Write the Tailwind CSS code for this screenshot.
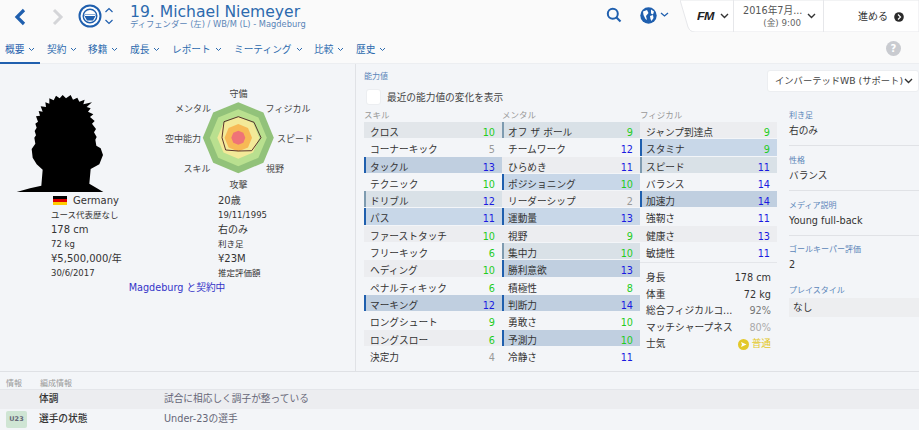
<!DOCTYPE html>
<html lang="ja">
<head>
    <meta charset="UTF-8">
    <title>Michael Niemeyer</title>
    <script src="https://cdn.jsdelivr.net/npm/@tailwindcss/browser@4"></script>
</head>
<body class="w-[919px] h-[430px] overflow-hidden bg-[#f3f5f8] text-[#333] text-[9.700px] font-['DejaVu_Sans','Noto_Sans_CJK_JP',sans-serif]">
    <!-- Title bar -->
    <header class="h-[32px] bg-[#fafafa] flex items-start relative">
        <svg class="ml-[14px] mt-[8px]" width="12" height="18" viewBox="0 0 12 18"><path d="M10 2 3 9l7 7" fill="none" stroke="#1f5fae" stroke-width="3.2"/></svg>
        <svg class="ml-[26px] mt-[8px]" width="12" height="18" viewBox="0 0 12 18"><path d="M2 2l7 7-7 7" fill="none" stroke="#d4d5d8" stroke-width="3"/></svg>
        <svg class="ml-[14px] mt-[4px]" width="24" height="24" viewBox="0 0 24 24">
            <circle cx="12" cy="12" r="10.5" fill="#fff" stroke="#1f5fae" stroke-width="2"/>
            <circle cx="12" cy="12" r="6.8" fill="none" stroke="#1f5fae" stroke-width="1.4"/>
            <path d="M6.5 10.5h11v1.5l-2.5 4.5h-6L6.500 12z" fill="#1f5fae"/>
            <path d="M7 11.500h10" stroke="#fff" stroke-width="1"/>
        </svg>
        <svg class="ml-[2px] mt-[7px]" width="10" height="18" viewBox="0 0 10 18"><path d="M1.500 5 5 1.500 8.500 5M1.500 13 5 16.500 8.500 13" fill="none" stroke="#1f5fae" stroke-width="1.200"/></svg>
        <div class="ml-[16px] mt-[5px]">
            <div class="text-[15.600px] leading-[15px] text-[#2c6aae]">19. Michael Niemeyer</div>
            <div class="text-[8.300px] leading-[9px] text-[#5b86b8]">ディフェンダー (左) / WB/M (L) - Magdeburg</div>
        </div>
        <svg class="absolute left-[606px] top-[7px]" width="16" height="16" viewBox="0 0 16 16"><circle cx="6.800" cy="6.800" r="5" fill="none" stroke="#1f5fae" stroke-width="2"/><path d="m10.500 10.500 4 4" stroke="#1f5fae" stroke-width="2.200"/></svg>
        <svg class="absolute left-[640px] top-[7px]" width="32" height="17" viewBox="0 0 32 17">
            <circle cx="8.500" cy="8.500" r="8.200" fill="#1f5fae"/>
            <path d="M3 4.500 7 3l1.500 3L6 9l1 4-1.500-1L3.500 8zM11 2.500l3 2-1 3-2-1zM10 9l3-1 .5 3-2 3-1-2z" fill="#fff"/>
            <path d="m21 6 3.500 3L28 6" fill="none" stroke="#1f5fae" stroke-width="1.300"/>
        </svg>
        <!-- Right hand tab -->
        <div class="absolute left-[680px] top-0 w-[239px] h-[33px]">
            <svg class="absolute left-0 top-0" width="239" height="33" viewBox="0 0 239 33"><path d="M0 0 8 27q2 5 7 5h224V0z" fill="#fff" stroke="#e6e7ea"/></svg>
            <div class="relative flex h-[32px]">
                <div class="w-[54px] pl-[17px] flex items-center gap-[6px] border-r border-[#e6e7ea]">
                    <span class="text-[10px] font-bold italic text-[#222] font-['Liberation_Sans',sans-serif] tracking-[-0.5px] scale-x-125 origin-left w-[14px]">FM</span>
                    <svg class="ml-[3px]" width="9" height="6" viewBox="0 0 9 6"><path d="m1 1 3.500 3.500L8 1" fill="none" stroke="#333" stroke-width="1.400"/></svg>
                </div>
                <div class="w-[90px] flex items-center border-r border-[#e6e7ea]">
                    <div class="w-[58px] ml-[9px] mt-[2px] text-right text-[#555] leading-[13px] whitespace-nowrap">
                        <div>2016年7月...</div>
                        <div class="text-[8.700px] text-[#666]">(金) 9:00</div>
                    </div>
                    <svg class="ml-[6px]" width="9" height="6" viewBox="0 0 9 6"><path d="m1 1 3.500 3.500L8 1" fill="none" stroke="#333" stroke-width="1.400"/></svg>
                </div>
                <div class="flex-1 pl-[34px] pt-[1px] flex items-center gap-[6px] text-[10px] text-[#333]">
                    <span>進める</span>
                    <svg width="10" height="10" viewBox="0 0 10 10"><circle cx="5" cy="5" r="4.800" fill="#2a2a2a"/><path d="m4 2.500 2.500 2.500L4 7.500" fill="none" stroke="#fff" stroke-width="1.200"/></svg>
                </div>
            </div>
        </div>
    </header>

    <!-- Tabs -->
    <nav class="h-[32px] bg-[#fafafa] border-b border-[#eceef1] flex items-center relative">
        <div id="tabs" class="flex pl-[5px] pt-[5px]"></div>
        <div class="absolute left-0 bottom-[-1px] w-[40px] h-[2px] bg-[#1f5fae]"></div>
        <div class="absolute left-[886px] top-[9px] w-[15px] h-[15px] rounded-full bg-[#c9cbd0] text-white font-bold text-[10px] leading-[15px] text-center">?</div>
    </nav>

    <main class="h-[308px] flex border-b border-[#dfe1e5]">
        <!-- Player summary -->
        <section class="w-[356px] shrink-0 border-r border-[#e0e2e6] relative">
            <div class="flex h-[128px]">
                <svg class="ml-[16px] mt-[27px] shrink-0" width="88" height="104" viewBox="50 40 264 296">
                    <path d="M52 335 92 324 126 316 130 268 112 252 100 232 97 206 108 190 105 172 110 165 106 152 112 142 108 130 116 124 110 108 122 106 118 92 130 94 124 78 140 80 138 66 150 70 150 54 163 60 170 46 181 54 190 44 200 54 214 44 221 58 234 52 240 64 256 58 252 72 278 66 262 80 274 84 266 94 282 102 272 110 286 122 278 130 290 146 284 156 292 170 288 178 291 196 304 204 311 224 300 252 274 266 270 310 312 335Z" fill="#000"/>
                </svg>
                <svg class="ml-[46px] mt-[22px] shrink-0" width="190" height="112" viewBox="150 86 190 112">
                    <polygon points="238.300,102.200 263.400,112.600 273.800,137.700 263.400,162.800 238.300,173.200 213.200,162.800 202.800,137.700 213.200,112.600" fill="#92c27a"/>
                    <polygon points="238.300,109.200 258.400,117.600 266.800,137.700 258.400,157.800 238.300,166.200 218.200,157.800 209.800,137.700 218.200,117.600" fill="#b9e08f"/>
                    <polygon points="238.300,116.700 253.100,122.900 259.300,137.700 253.100,152.500 238.300,158.700 223.500,152.500 217.300,137.700 223.500,122.900" fill="#f3e998"/>
                    <polygon points="238.300,124 248,128 252,137.700 248,147.400 238.300,151.400 228.600,147.400 224.600,137.700 228.600,128" fill="#f7b955"/>
                    <polygon points="238.300,130.700 243.300,132.700 245.300,137.700 243.300,142.700 238.300,144.700 233.300,142.700 231.300,137.700 233.300,132.700" fill="#ef7377"/>
                    <polygon points="238.300,116.700 254,122.300 261,137.700 251.700,150.700 238.300,151 225.700,150 222,137.700 224,121.700" fill="none" stroke="#4a1f1f" stroke-width="0.900"/>
                    <g font-size="9" fill="#444" text-anchor="middle">
                        <text x="238.500" y="97">守備</text>
                        <text x="288" y="112">フィジカル</text>
                        <text x="295" y="142">スピード</text>
                        <text x="275" y="172">視野</text>
                        <text x="238.500" y="188">攻撃</text>
                        <text x="197" y="172">スキル</text>
                        <text x="183" y="142">空中能力</text>
                        <text x="193" y="112">メンタル</text>
                    </g>
                </svg>
            </div>
            <div class="grid grid-cols-[167px_1fr] pl-[51px] mt-[1px]">
                <div class="h-[15px] flex items-center text-[10px] text-[#333]">
                    <span class="ml-[2px] mr-[6px] w-[14px] h-[9px] flex flex-col">
                        <span class="h-[3px] bg-black"></span><span class="h-[3px] bg-[#d00]"></span><span class="h-[3px] bg-[#fc0]"></span>
                    </span>Germany
                </div>
                <div class="h-[15px] leading-[15px] text-[10px]">20歳</div>
                <div class="h-[14px] leading-[14px] text-[8.500px]">ユース代表歴なし</div>
                <div class="h-[14px] leading-[14px] text-[8.500px]">19/11/1995</div>
                <div class="h-[15px] leading-[15px] text-[10px]">178 cm</div>
                <div class="h-[15px] leading-[15px] text-[10px]">右のみ</div>
                <div class="h-[14px] leading-[14px] text-[8.500px]">72 kg</div>
                <div class="h-[14px] leading-[14px] text-[8.500px]">利き足</div>
                <div class="h-[15px] leading-[15px] text-[10px]">¥5,500,000/年</div>
                <div class="h-[15px] leading-[15px] text-[10px]">¥23M</div>
                <div class="h-[14px] leading-[14px] text-[8.500px]">30/6/2017</div>
                <div class="h-[14px] leading-[14px] text-[8.500px]">推定評価額</div>
            </div>
            <div class="w-[354px] text-center text-[#3434c8] leading-[15px]">Magdeburg と契約中</div>
        </section>

        <!-- Attributes -->
        <section class="flex-1 relative pl-[8px]">
            <div class="text-[8px] leading-[10px] text-[#5b86b8] mt-[8px]">能力値</div>
            <label class="flex items-center mt-[6px] ml-[2px] h-[17px] gap-[6px] text-[#444]">
                <span class="w-[15px] h-[16px] bg-white border border-[#eceef1] rounded-[3px]"></span>
                <span class="mt-[3px]">最近の能力値の変化を表示</span>
            </label>
            <div class="absolute left-[411px] top-[6px] w-[152px] h-[22px] bg-white rounded-[3px] border border-[#eceef1] flex items-center justify-between pl-[7px] pr-[5px] text-[9.300px] text-[#444] whitespace-nowrap">
                インバーテッドWB (サポート)
                <svg width="9" height="6" viewBox="0 0 9 6"><path d="m1 1 3.500 3.500L8 1" fill="none" stroke="#333" stroke-width="1.400"/></svg>
            </div>
            <div class="flex mt-[3px]">
                <div class="w-[138px]">
                    <div class="text-[8.500px] leading-[15px] h-[14px] text-[#999]">スキル</div>
                    <div id="skills"></div>
                </div>
                <div class="w-[138px]">
                    <div class="text-[8.500px] leading-[15px] h-[14px] text-[#999]">メンタル</div>
                    <div id="mental"></div>
                </div>
                <div class="w-[137px]">
                    <div class="text-[8.500px] leading-[15px] h-[14px] text-[#999]">フィジカル</div>
                    <div id="physical"></div>
                    <div class="border-t border-[#e4e6ea] mt-[3px] pt-[7px] pl-[6px] pr-[6px]" id="stats"></div>
                </div>
                <!-- Side details -->
                <div class="ml-[12px] flex-1">
                    <div class="h-[38px] border-b border-[#e0e2e6] pt-[3px]">
                        <div class="text-[8px] leading-[10px] text-[#5b86b8]">利き足</div>
                        <div class="leading-[19px]">右のみ</div>
                    </div>
                    <div class="h-[45px] border-b border-[#e0e2e6] pt-[3px]">
                        <div class="text-[8px] leading-[10px] text-[#5b86b8] mt-[7px]">性格</div>
                        <div class="leading-[19px]">バランス</div>
                    </div>
                    <div class="h-[45px] border-b border-[#e0e2e6] pt-[3px]">
                        <div class="text-[8px] leading-[10px] text-[#5b86b8] mt-[7px]">メディア説明</div>
                        <div class="leading-[19px]">Young full-back</div>
                    </div>
                    <div class="pt-[9px]">
                        <div class="text-[8px] leading-[10px] text-[#5b86b8]">ゴールキーパー評価</div>
                        <div class="leading-[20px]">2</div>
                    </div>
                    <div class="text-[8px] leading-[10px] text-[#5b86b8] mt-[11px]">プレイスタイル</div>
                    <div class="h-[19px] mt-[2px] leading-[19px] pl-[4px] bg-[#edeef0]">なし</div>
                </div>
            </div>
        </section>
    </main>

    <!-- Squad info -->
    <footer>
        <div class="h-[17px] flex pl-[6px] gap-[18px] text-[8px] leading-[24px] text-[#999]">
            <span>情報</span><span>編成情報</span>
        </div>
        <div class="h-[20px] bg-[#ecedf0] flex items-center border-t border-[#e4e6ea]">
            <span class="ml-[39px] w-[125px] font-medium text-[#333]">体調</span>
            <span class="text-[#667]">試合に相応しく調子が整っている</span>
        </div>
        <div class="h-[21px] flex items-center">
            <span class="ml-[6px] w-[21px] h-[17px] rounded-[2px] bg-[#cfe5d4] text-[#667] text-[6.500px] font-bold leading-[17px] text-center">U23</span>
            <span class="ml-[12px] w-[125px] font-medium text-[#333]">選手の状態</span>
            <span class="text-[#667]">Under-23の選手</span>
        </div>
    </footer>

    <script>
        // Class names per row highlight
        const ROW = {
            none: 'pl-[6px]',
            grey: 'pl-[6px] bg-[#ecedf0]',
            pale: 'pl-[6px] bg-[#e2e6ea]',
            mid: 'pl-[4px] border-l-2 border-[#7e9bb0] bg-[#d9e1e7]',
            soft: 'pl-[4px] border-l-2 border-[#1f5fae] bg-[#c8d7e8]',
            dark: 'pl-[4px] border-l-2 border-[#1f5fae] bg-[#c0cfe0]',
        };
        const NUM = { g: 'text-[#1fcc1f]', b: 'text-[#1a1ae0]', x: 'text-[#999]' };

        const SKILLS = [
            ['クロス', 10, 'g', 'pale'], ['コーナーキック', 5, 'x', 'none'], ['タックル', 13, 'b', 'dark'],
            ['テクニック', 10, 'g', 'none'], ['ドリブル', 12, 'b', 'mid'], ['パス', 11, 'b', 'soft'],
            ['ファーストタッチ', 10, 'g', 'grey'], ['フリーキック', 6, 'g', 'none'], ['ヘディング', 10, 'g', 'grey'],
            ['ペナルティキック', 6, 'g', 'none'], ['マーキング', 12, 'b', 'dark'], ['ロングシュート', 9, 'g', 'none'],
            ['ロングスロー', 6, 'g', 'grey'], ['決定力', 4, 'x', 'none'],
        ];
        const MENTAL = [
            ['オフ ザ ボール', 9, 'g', 'mid'], ['チームワーク', 12, 'b', 'none'], ['ひらめき', 11, 'b', 'grey'],
            ['ポジショニング', 10, 'g', 'soft'], ['リーダーシップ', 2, 'x', 'grey'], ['運動量', 13, 'b', 'soft'],
            ['視野', 9, 'g', 'grey'], ['集中力', 10, 'g', 'mid'], ['勝利意欲', 13, 'b', 'dark'],
            ['積極性', 8, 'g', 'none'], ['判断力', 14, 'b', 'dark'], ['勇敢さ', 10, 'g', 'none'],
            ['予測力', 10, 'g', 'dark'], ['冷静さ', 11, 'b', 'none'],
        ];
        const PHYSICAL = [
            ['ジャンプ到達点', 9, 'g', 'grey'], ['スタミナ', 9, 'g', 'soft'], ['スピード', 11, 'b', 'mid'],
            ['バランス', 14, 'b', 'none'], ['加速力', 14, 'b', 'dark'], ['強靭さ', 11, 'b', 'none'],
            ['健康さ', 13, 'b', 'grey'], ['敏捷性', 11, 'b', 'none'],
        ];

        function renderRows(id, rows) {
            document.getElementById(id).innerHTML = rows.map(([name, value, color, row]) =>
                `<div class="h-[16.300px] mb-[1px] leading-[21px] pr-[7px] flex justify-between ${ROW[row]}"><span>${name}</span><span class="${NUM[color]}">${value}</span></div>`
            ).join('');
        }
        renderRows('skills', SKILLS);
        renderRows('mental', MENTAL);
        renderRows('physical', PHYSICAL);

        document.getElementById('stats').innerHTML = [
            ['身長', '178 cm', 'text-[#333]'], ['体重', '72 kg', 'text-[#333]'],
            ['総合フィジカルコ...', '92%', 'text-[#777]'], ['マッチシャープネス', '80%', 'text-[#aaa]'],
        ].map(([name, value, color]) =>
            `<div class="h-[16.500px] leading-[16.500px] flex justify-between"><span>${name}</span><span class="${color}">${value}</span></div>`
        ).join('') + `<div class="h-[16.500px] leading-[16.500px] flex justify-between items-center"><span>士気</span>
            <span class="flex items-center gap-[3px] text-[#e3c82a]"><svg width="11" height="11" viewBox="0 0 11 11"><circle cx="5.500" cy="5.500" r="5.500" fill="#e3c82a"/><path d="M3 3l5.500 2.500L3 8l1-2.500z" fill="#fff"/></svg>普通</span></div>`;

        const TABS = [['概要', 'w-[42px]', 'text-[#1f5fae]'], ['契約', 'w-[41px]', 'text-[#2c6aae]'], ['移籍', 'w-[42px]', 'text-[#2c6aae]'], ['成長', 'w-[42px]', 'text-[#2c6aae]'], ['レポート', 'w-[62px]', 'text-[#2c6aae]'], ['ミーティング', 'w-[80px]', 'text-[#2c6aae]'], ['比較', 'w-[42px]', 'text-[#2c6aae]'], ['歴史', 'w-[42px]', 'text-[#2c6aae]']];
        document.getElementById('tabs').innerHTML = TABS.map(([name, width, color]) =>
            `<div class="${width} ${color} flex items-center gap-[4px]">${name}<svg width="7" height="5" viewBox="0 0 7 5"><path d="m1 1 2.500 2.500L6 1" fill="none" stroke="#2c6aae" stroke-width="1"/></svg></div>`
        ).join('');
    </script>
</body>
</html>
